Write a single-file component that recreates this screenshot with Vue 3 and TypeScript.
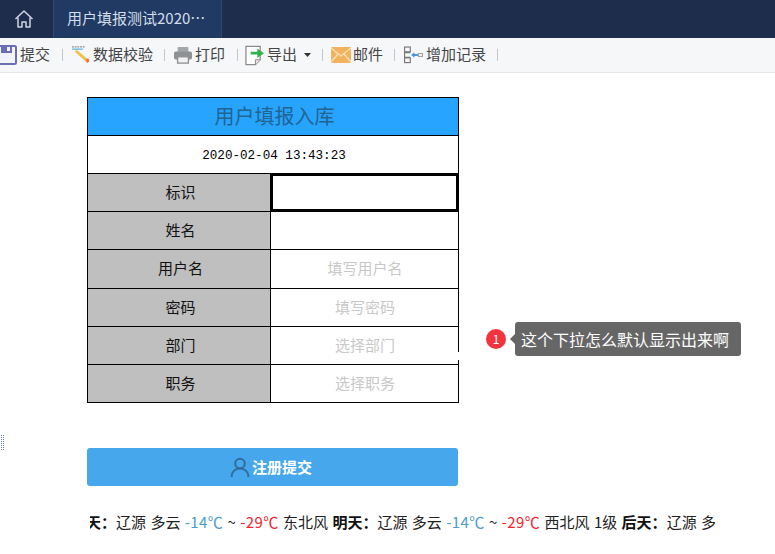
<script setup lang="ts">
interface Row { label: string; placeholder: string; height: number }
const rows: Row[] = [
  { label: '标识', placeholder: '', height: 38 },
  { label: '姓名', placeholder: '', height: 38 },
  { label: '用户名', placeholder: '填写用户名', height: 39 },
  { label: '密码', placeholder: '填写密码', height: 38 },
  { label: '部门', placeholder: '选择部门', height: 38 },
  { label: '职务', placeholder: '选择职务', height: 38 },
]
</script>

<template>
  <div class="page">
    <header class="topbar">
      <div class="home">
        <svg width="20" height="20" viewBox="0 0 20 20" fill="none" stroke="#cfd6e2" stroke-width="1.5" stroke-linejoin="round">
          <path d="M1.5 10 10 2l8.500 8" />
          <path d="M4 8.500V18h4v-5h4v5h4V8.500" />
        </svg>
      </div>
      <div class="tab">用户填报测试2020…</div>
    </header>

    <nav class="toolbar">
      <div class="tool first">
        <svg width="20" height="20" viewBox="0 0 20 20">
          <rect x="1" y="1" width="18" height="18" rx="1.500" fill="#f2f3fa" stroke="#6a6fb2" stroke-width="2" />
          <rect x="4" y="1" width="11" height="7" fill="#6a6fb2" />
          <rect x="10" y="2" width="3" height="4" fill="#f2f3fa" />
        </svg>
        <span>提交</span>
      </div>
      <i class="sep wide"></i>
      <div class="tool">
        <svg width="18" height="20" viewBox="0 0 20 20">
          <path d="M0 1h14" stroke="#8b8b8b" stroke-width="1.500" stroke-dasharray="2 1" />
          <path d="M0 3.500h12" stroke="#4aa8e8" stroke-width="1.200" />
          <path d="m3 6 2.500-1.500L18 15l-2 3Z" fill="#f2c14b" />
          <path d="m15.500 14.500 3 -.5.500 3.500-2.500 1.500Z" fill="#ef6c4a" />
        </svg>
        <span>数据校验</span>
      </div>
      <i class="sep"></i>
      <div class="tool">
        <svg width="18" height="20" viewBox="0 0 20 20">
          <rect x="4" y="1" width="12" height="6" rx="1" fill="#a4a6a8" />
          <rect x="0" y="6" width="20" height="9" rx="2" fill="#8f9294" />
          <rect x="4" y="12" width="12" height="7" fill="#f2f2f2" stroke="#8f9294" stroke-width="1.500" />
        </svg>
        <span>打印</span>
      </div>
      <i class="sep wide before-export"></i>
      <div class="tool">
        <svg width="19" height="21" viewBox="0 0 20 22">
          <path d="M1 1.500h15v14l-5 5H1Z" fill="#fff" stroke="#8a8a8a" stroke-width="1.300" />
          <path d="M16 15.500h-5v5" fill="#e8e8e8" stroke="#8a8a8a" stroke-width="1" />
          <path d="M6 7h7V3.500L20 8.500l-7 5V10H6Z" fill="#35b04f" />
        </svg>
        <span>导出</span>
        <svg class="caret" width="7" height="4" viewBox="0 0 7 4"><path d="M0 0h7L3.500 4Z" fill="#333" /></svg>
      </div>
      <i class="sep before-mail"></i>
      <div class="tool mail">
        <svg width="20" height="16" viewBox="0 0 20 16">
          <rect width="20" height="16" rx="1" fill="#f2b35e" />
          <path d="m0 1 10 8 10-8M0 15l7-8M20 15l-7-8" fill="none" stroke="#fbe3bc" stroke-width="1.300" />
        </svg>
        <span>邮件</span>
      </div>
      <i class="sep"></i>
      <div class="tool">
        <svg width="19" height="18" viewBox="0 0 20 18" fill="none">
          <rect x="0.600" y="0.600" width="6" height="5" stroke="#777" stroke-width="1.200" />
          <path d="M6.600 6.500H.6v5h6" stroke="#777" stroke-width="1.200" />
          <rect x="0.600" y="12" width="6" height="5" stroke="#777" stroke-width="1.200" />
          <path d="M7.500 9 11 6v2h4v2h-4v2Z" fill="#4f97d8" />
          <rect x="15" y="7.500" width="4.500" height="3" stroke="#9a9a9a" stroke-width="1" />
        </svg>
        <span>增加记录</span>
      </div>
      <i class="sep"></i>
    </nav>

    <main class="content">
      <table class="sheet">
        <colgroup>
          <col class="label-col" />
          <col />
        </colgroup>
        <tbody>
          <tr class="h38">
            <td colspan="2" class="title">用户填报入库</td>
          </tr>
          <tr class="h38">
            <td colspan="2" class="stamp">2020-02-04 13:43:23</td>
          </tr>
          <tr v-for="(row, i) in rows" :key="row.label" :style="{ height: row.height + 'px' }">
            <td class="label">{{ row.label }}</td>
            <td class="value" :class="{ selected: i === 0 }">{{ row.placeholder }}</td>
          </tr>
        </tbody>
      </table>

      <button class="submit" type="button">
        <svg width="20" height="20" viewBox="0 0 20 20" fill="none" stroke="#2f6d9c" stroke-width="2">
          <circle cx="10" cy="6.500" r="4.800" />
          <path d="M1.500 20c0-5 3.500-8.500 8.500-8.500s8.500 3.500 8.500 8.500" />
        </svg>
        <span>注册提交</span>
      </button>

      <div class="weather">
        <div class="ticker">
          <b>今天：</b>辽源 多云 <em class="cold">-14℃</em> ~ <em class="hot">-29℃</em> 东北风
          <b>明天：</b>辽源 多云 <em class="cold">-14℃</em> ~ <em class="hot">-29℃</em> 西北风 1级
          <b>后天：</b>辽源 多
        </div>
      </div>
    </main>

    <div class="gap-patch"></div>
    <div class="handle"></div>

    <div class="note">
      <span class="badge">1</span>
      <div class="bubble">这个下拉怎么默认显示出来啊</div>
    </div>
  </div>
</template>

<style>
html, body { margin: 0; background: #fff; }
</style>

<style scoped>
.page {
  position: relative;
  width: 775px;
  height: 554px;
  overflow: hidden;
  background: #fff;
  font-family: "Noto Sans CJK SC", "Liberation Sans", sans-serif;
  color: #333;
}
.topbar {
  display: flex;
  height: 38px;
  background: #1f2d4d;
}
.home {
  width: 48px;
  margin-right: 5px;
  display: flex;
  align-items: center;
  justify-content: center;
}
.tab {
  width: 169px;
  box-sizing: border-box;
  padding-left: 13px;
  line-height: 35px;
  font-size: 15px;
  color: #d5dfec;
  background: #203a63;
  border-left: 1px solid #2c4873;
  border-right: 1px solid #2c4873;
  white-space: nowrap;
}
.toolbar {
  display: flex;
  align-items: center;
  height: 34px;
  background: #f6f7f9;
  border-bottom: 1px solid #e4e6e9;
  font-size: 15px;
  color: #444;
}
.tool {
  display: flex;
  align-items: center;
  gap: 3px;
  white-space: nowrap;
}
.tool span {
  line-height: 20px;
  padding-bottom: 3px;
}
.tool.first { margin-left: -3px; }
.tool.mail { gap: 2px; }
.caret { margin-left: 4px; }
.sep {
  width: 1px;
  height: 12px;
  margin: 0 9px 0 11px;
  background: #c4c6c9;
}
.sep.wide { margin-left: 12px; }
.sep.before-export { margin-right: 7px; }
.sep.before-mail { margin-right: 8px; }
.content {
  padding: 24px 0 0 87px;
}
.sheet {
  width: 372px;
  table-layout: fixed;
  border-collapse: collapse;
  font-size: 15px;
  color: #111;
}
.label-col { width: 183px; }
.h38 { height: 38px; }
.sheet td {
  padding: 0 0 3px 1px;
  border: 1px solid #000;
  text-align: center;
}
.sheet td.label { padding-left: 3px; }
.sheet td.title {
  padding: 0 0 2px 3px;
  background: #26a4ff;
  font-size: 20px;
  color: #22648f;
}
.sheet td.stamp {
  padding: 3px 0 0 2px;
  font-family: "Liberation Mono", monospace;
  font-size: 12.600px;
  color: #000;
}
.label {
  background: #bfbfbf;
}
.value {
  color: #c8c8c8;
}
.sheet td.selected {
  box-shadow: inset 0 0 0 2px #000;
}
.submit {
  display: flex;
  align-items: center;
  justify-content: center;
  gap: 2px;
  width: 371px;
  height: 38px;
  margin-top: 45px;
  padding: 0;
  border: 0;
  border-radius: 3px;
  background: #46a7ec;
  color: #fff;
  font-family: inherit;
  font-size: 15px;
  font-weight: 700;
}
.submit span { padding-bottom: 2px; margin-right: 3px; }
.weather {
  width: 626px;
  margin: 24px 0 0 3px;
  overflow: hidden;
  font-size: 15px;
  line-height: 24px;
  color: #222;
}
.ticker {
  margin-left: -19px;
  white-space: nowrap;
  word-spacing: 1px;
}
.ticker b { color: #111; font-weight: 600; }
.ticker em { font-style: normal; letter-spacing: 0.400px; }
.cold { color: #4a9cc7; }
.hot { color: #f5222d; }
.gap-patch {
  position: absolute;
  left: 457px;
  top: 352px;
  width: 3px;
  height: 8px;
  background: #fff;
}
.handle {
  position: absolute;
  left: 0;
  top: 435px;
  width: 5px;
  height: 15px;
  background-image: conic-gradient(#6d7f99 25%, transparent 0);
  background-size: 2px 2px;
}
.note {
  position: absolute;
  left: 486px;
  top: 322px;
  display: flex;
  align-items: center;
  gap: 9px;
}
.badge {
  width: 20px;
  height: 20px;
  border-radius: 50%;
  background: #f5333f;
  color: #fff;
  font-size: 12px;
  line-height: 20px;
  text-align: center;
}
.bubble {
  position: relative;
  width: 226px;
  height: 34px;
  box-sizing: border-box;
  padding-left: 6px;
  border-radius: 3px;
  background: #666;
  color: #fff;
  font-size: 16px;
  line-height: 34px;
  white-space: nowrap;
}
.bubble::before {
  content: "";
  position: absolute;
  left: -5px;
  top: 12px;
  border-style: solid;
  border-width: 5px 5px 5px 0;
  border-color: transparent #666 transparent transparent;
}
</style>
